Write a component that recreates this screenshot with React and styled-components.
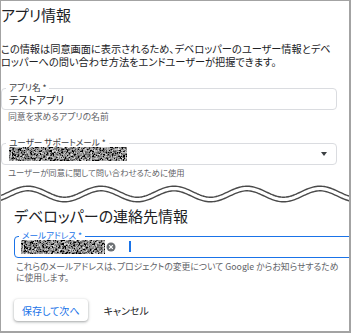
import React from "react";
import styled, { createGlobalStyle } from "styled-components";

const Global = createGlobalStyle`
  html, body { margin: 0; padding: 0; background: #fff; }
  body {
    font-family: "Noto Sans CJK JP", "Noto Sans", sans-serif;
    font-feature-settings: "palt";
    color: #202124;
  }
`;

const Frame = styled.div`
  box-sizing: border-box;
  width: 351px;
  height: 333px;
  border-style: solid;
  border-color: #a3a3a3;
  border-width: 1px 2px 2px 1px;
  overflow: hidden;
  display: flex;
  flex-direction: column;
  background: #fff;
`;

const Section = styled.section`
  display: flex;
  flex-direction: column;
  padding: ${(p) => p.$pad};
`;

const Title = styled.h1`
  margin: 0;
  font-size: 15px;
  line-height: 20px;
  font-weight: 400;
  color: #202124;
  letter-spacing: 0;
`;

const Para = styled.p`
  margin: ${(p) => p.$m};
  font-size: 10.2px;
  line-height: 13px;
  color: #202124;
  white-space: nowrap;
`;

const Field = styled.div`
  position: relative;
  box-sizing: border-box;
  height: 22px;
  margin: ${(p) => p.$m};
  border: ${(p) => (p.$focused ? "1.5px solid #1a73e8" : "1px solid #dadce0")};
  border-radius: 4px;
  display: flex;
  align-items: center;
  gap: 4px;
  padding: 0 ${(p) => (p.$focused ? "6px" : "7px")};
  ${(p) => (p.$wide ? "margin-right: -20px;" : "")}
`;

const Label = styled.span`
  position: absolute;
  left: 4px;
  top: -7px;
  padding: 0 3px;
  background: #fff;
  font-size: 8.6px;
  line-height: 10px;
  color: ${(p) => (p.$focused ? "#1a73e8" : "#3c4043")};
`;

const Value = styled.span`
  font-size: 10.5px;
  line-height: 13px;
  padding-top: 2px;
  color: #202124;
`;

const Helper = styled.div`
  margin: ${(p) => p.$m};
  padding-left: ${(p) => p.$pl || "7px"};
  font-size: ${(p) => p.$fs || "8.8px"};
  line-height: ${(p) => p.$lh || "12px"};
  color: #5f6368;
  white-space: nowrap;
`;

const Spacer = styled.div`
  flex: 1;
`;

const Caret = styled.span`
  width: 0;
  height: 0;
  border-left: 3.5px solid transparent;
  border-right: 3.5px solid transparent;
  border-top: 4px solid #3c4043;
  margin-right: 2px;
`;

const Cursor = styled.span`
  width: 1.5px;
  height: 11px;
  background: #1a73e8;
  margin-left: 9px;
`;

const Chip = styled.div`
  display: flex;
  align-items: center;
  gap: 1px;
`;

const Actions = styled.div`
  display: flex;
  align-items: center;
  gap: 16px;
  margin-top: 15.5px;
`;

const PrimaryButton = styled.button`
  box-sizing: border-box;
  height: 22px;
  padding: 0 8px;
  border: none;
  border-radius: 4px;
  background: #fff;
  color: #1a73e8;
  font-family: inherit;
  font-feature-settings: "palt";
  font-size: 10px;
  box-shadow: 0 1px 2px rgba(60, 64, 67, 0.3), 0 1px 3px 1px rgba(60, 64, 67, 0.15);
`;

const TextButton = styled.button`
  border: none;
  background: none;
  padding: 0;
  font-family: inherit;
  font-feature-settings: "palt";
  font-size: 10px;
  color: #202124;
`;

const TearSvg = styled.svg`
  display: block;
  flex: none;
`;

let noiseId = 0;
function Noise({ w, h }) {
  const id = React.useMemo(() => `nz${noiseId++}`, []);
  return (
    <svg width={w} height={h} style={{ display: "block" }}>
      <filter id={id} x="0" y="0" width="100%" height="100%">
        <feTurbulence type="fractalNoise" baseFrequency="0.55" numOctaves="3" seed="11" />
        <feColorMatrix
          type="matrix"
          values="0.5 0.5 0 0 0  0.5 0.5 0 0 0  0.5 0.5 0 0 0  0 0 0 0 1"
        />
        <feComponentTransfer>
          <feFuncR type="linear" slope="2.6" intercept="-1.05" />
          <feFuncG type="linear" slope="2.6" intercept="-1.05" />
          <feFuncB type="linear" slope="2.6" intercept="-1.05" />
        </feComponentTransfer>
      </filter>
      <rect width={w} height={h} filter={`url(#${id})`} />
    </svg>
  );
}

function ClearIcon() {
  return (
    <svg width="10" height="10" viewBox="0 0 10 10" style={{ display: "block" }}>
      <circle cx="5" cy="5" r="4.5" fill="#6b6f73" />
      <path d="M3.2 3.2 L6.8 6.8 M6.8 3.2 L3.2 6.8" stroke="#fff" strokeWidth="1.2" />
    </svg>
  );
}

function Tear() {
  const W = 351;
  const period = 73;
  const pts = [];
  for (let x = -4; x <= W + 4; x += 1.5) {
    const y = 16 - 5.5 * Math.cos((2 * Math.PI * (x - 27)) / period);
    pts.push(`${x.toFixed(1)},${y.toFixed(2)}`);
  }
  const d = "M" + pts.join(" L");
  return (
    <TearSvg width={W} height="28" viewBox={`0 0 ${W} 28`}>
      <path d={d} fill="none" stroke="#4a4a4a" strokeWidth="6" />
      <path d={d} fill="none" stroke="#ffffff" strokeWidth="3.2" />
    </TearSvg>
  );
}

export default function App() {
  return (
    <>
      <Global />
      <Frame>
        <Section $pad="4px 12px 0 0">
          <Title>アプリ情報</Title>
          <Para $m="17px 0 0 0">
            この情報は同意画面に表示されるため、デベロッパーのユーザー情報とデベ
            <br />
            ロッパーへの問い合わせ方法をエンドユーザーが把握できます。
          </Para>
          <Field $m="19.5px 0 0 0">
            <Label>アプリ名 *</Label>
            <Value>テストアプリ</Value>
          </Field>
          <Helper $m="1.5px 0 0 0">同意を求めるアプリの名前</Helper>
          <Field $m="19.5px 0 0 0">
            <Label>ユーザー サポートメール *</Label>
            <Noise w={118} h={14} />
            <Spacer />
            <Caret />
          </Field>
          <Helper $m="1px 0 0 0" $fs="8.3px">ユーザーが同意に関して問い合わせるために使用</Helper>
        </Section>
        <Tear />
        <Section $pad="0 0 0 13px">
          <Title>デベロッパーの連絡先情報</Title>
          <Field $m="10px 0 0 0" $focused $wide>
            <Label $focused>メールアドレス *</Label>
            <Chip>
              <Noise w={84} h={14} />
              <ClearIcon />
            </Chip>
            <Cursor />
          </Field>
          <Helper $m="3px 0 0 0" $pl="2px" $lh="11.5px">
            これらのメールアドレスは、プロジェクトの変更について Google からお知らせするため
            <br />
            に使用します。
          </Helper>
          <Actions>
            <PrimaryButton>保存して次へ</PrimaryButton>
            <TextButton>キャンセル</TextButton>
          </Actions>
        </Section>
      </Frame>
    </>
  );
}
